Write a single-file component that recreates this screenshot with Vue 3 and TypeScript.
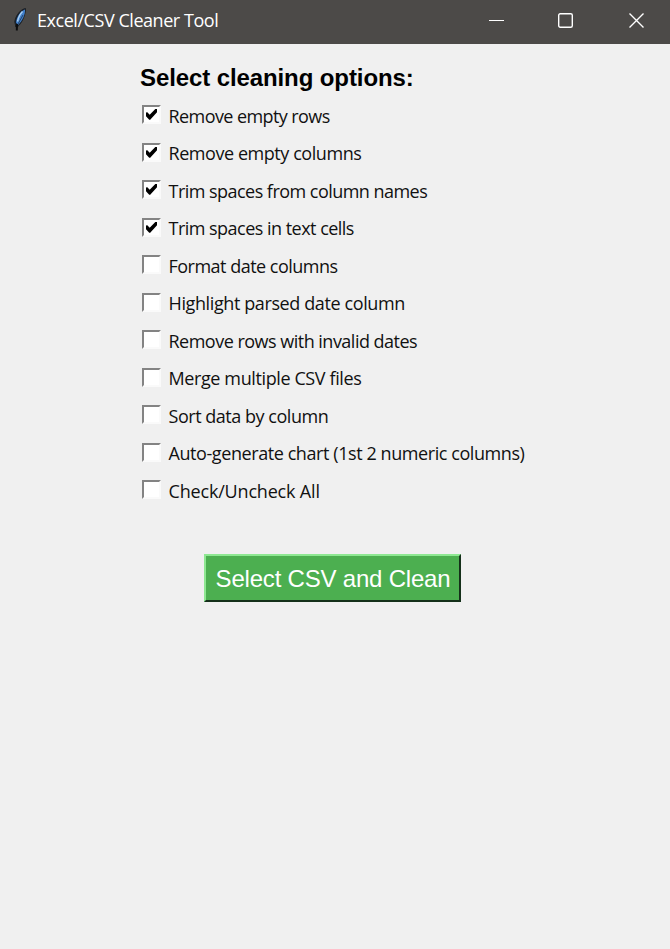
<script setup lang="ts">
import { ref } from 'vue'

interface Option {
  label: string
  checked: boolean
  tracking: number
}

const options = ref<Option[]>([
  { label: 'Remove empty rows', checked: true, tracking: -0.58 },
  { label: 'Remove empty columns', checked: true, tracking: -0.44 },
  { label: 'Trim spaces from column names', checked: true, tracking: -0.53 },
  { label: 'Trim spaces in text cells', checked: true, tracking: -0.52 },
  { label: 'Format date columns', checked: false, tracking: -0.51 },
  { label: 'Highlight parsed date column', checked: false, tracking: -0.39 },
  { label: 'Remove rows with invalid dates', checked: false, tracking: -0.51 },
  { label: 'Merge multiple CSV files', checked: false, tracking: -0.39 },
  { label: 'Sort data by column', checked: false, tracking: -0.47 },
  { label: 'Auto-generate chart (1st 2 numeric columns)', checked: false, tracking: -0.42 },
  { label: 'Check/Uncheck All', checked: false, tracking: -0.18 },
])

function toggle(index: number): void {
  const option = options.value[index]
  option.checked = !option.checked
  if (index === options.value.length - 1) {
    options.value.forEach((item) => (item.checked = option.checked))
  }
}
</script>

<template>
  <div class="window">
    <header class="titlebar">
      <svg class="feather" width="16" height="26" viewBox="0 0 16 26">
        <path d="M13.500 1.500C8.500 2.500 4 8 2.800 14.500L3.800 20L5.300 20C10 16 13.500 8 13.500 1.500Z" fill="#172332" stroke="#1d2023" stroke-width="1" />
        <path d="M13 2.500C9 4 5 8.500 4 15.500L6 18C10.500 13.500 13.300 7.500 13 2.500Z" fill="#4180cb" />
        <path d="M10.500 4.500C8 7 6.500 10 5.500 14.500" fill="none" stroke="#a9cef0" stroke-width="1.500" />
        <path d="M11 8L6 17" stroke="#20344e" stroke-width="0.800" />
        <path d="M5 17L4.800 23.500" stroke="#0c0d0e" stroke-width="2" />
      </svg>
      <span class="title">Excel/CSV Cleaner Tool</span>
      <div class="controls">
        <svg width="16" height="16" viewBox="0 0 16 16"><path d="M0 7.500H15" stroke="#fff" /></svg>
        <svg width="16" height="16" viewBox="0 0 16 16"><rect x="0.700" y="0.700" width="13.600" height="13.600" rx="1.500" fill="none" stroke="#fff" stroke-width="1.400" /></svg>
        <svg class="close" width="16" height="16" viewBox="0 0 16 16"><path d="M0.500 0.500L14.500 14.500M14.500 0.500L0.500 14.500" stroke="#fff" stroke-width="1.400" /></svg>
      </div>
    </header>
    <main class="body">
      <section class="options">
        <h1>Select cleaning options:</h1>
        <div v-for="(option, index) in options" :key="option.label" class="option" @click="toggle(index)">
          <span class="box">
            <svg v-if="option.checked" width="13" height="13" viewBox="0 0 13 13"><path d="M1 4.500L2.300 4.300L4.700 6.800L10.300 1L12 1V4.300L5.200 11.700H4.200L1 8.300Z" fill="#000" /></svg>
          </span>
          <span class="label" :style="{ letterSpacing: option.tracking + 'px' }">{{ option.label }}</span>
        </div>
      </section>
      <button class="clean" type="button">Select CSV and Clean</button>
    </main>
  </div>
</template>

<style>
body {
  margin: 0;
  background: #f0f0f0;
}
</style>

<style scoped>
.window {
  width: 670px;
  height: 949px;
  overflow: hidden;
  background: #f0f0f0;
}
.titlebar {
  display: flex;
  align-items: center;
  box-sizing: border-box;
  height: 44px;
  padding: 0 25px 4px 12px;
  background: #4c4a48;
  color: #fff;
}
.feather {
  margin-right: 9px;
}
.title {
  font: 18px/24px "Open Sans", "Noto Sans", sans-serif;
  letter-spacing: -0.45px;
  white-space: nowrap;
}
.controls {
  display: flex;
  gap: 53px;
  margin: 2px 0 0 auto;
}
.close {
  margin-left: 2px;
}
.body {
  display: flex;
  flex-direction: column;
}
.options {
  padding: 20px 0 0 140px;
}
h1 {
  margin: 0;
  height: 33px;
  font: bold 24px/28px "Liberation Sans", Arial, sans-serif;
  letter-spacing: -0.1px;
  color: #000;
  white-space: nowrap;
}
.option {
  display: flex;
  align-items: center;
  height: 37.5px;
}
.box {
  box-sizing: border-box;
  display: flex;
  align-items: center;
  justify-content: center;
  width: 19px;
  height: 19px;
  margin: 0 8px 2px 1.500px;
  border: 2px solid;
  border-color: #838383 #fafafa #fafafa #838383;
  background: #fff;
}
.label {
  font: 18px/24px "Open Sans", "Noto Sans", sans-serif;
  color: #111;
  white-space: nowrap;
}
.clean {
  box-sizing: border-box;
  width: 257px;
  height: 48px;
  margin: 44px 0 0 204px;
  padding: 1px 0 0 1px;
  border: 2px solid;
  border-color: #8ee892 #15301a #15301a #8ee892;
  background: #4caf50;
  color: #fff;
  font: 24px/43px "Liberation Sans", Arial, sans-serif;
  letter-spacing: -0.2px;
  white-space: nowrap;
}
</style>
